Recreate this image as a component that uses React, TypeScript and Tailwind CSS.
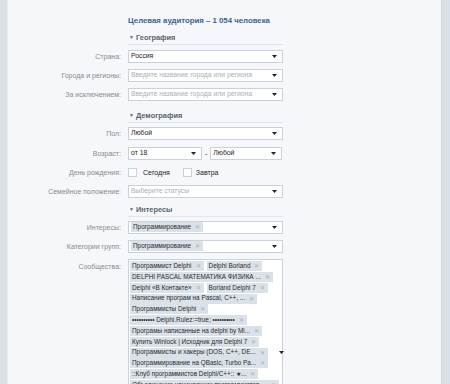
import React from "react";

const Arrow = () => (
  <svg width="5" height="3" viewBox="0 0 5 3" className="shrink-0">
    <path d="M0 0H5L2.5 3Z" fill="#222" />
  </svg>
);

const Label = ({ children }: { children: React.ReactNode }) => (
  <div className="w-[113px] shrink-0 text-right text-[7px] text-[#8a8a8a] leading-none">{children}</div>
);

const Tag = ({ text }: { text: string }) => (
  <span className="inline-flex items-center h-[10px] bg-[#dae1e8] pl-[2px] pr-[3px] text-[6.4px] text-[#2b2b2b] leading-none whitespace-nowrap">
    {text}
    <span className="ml-[4px] text-[#9fb0c2] text-[6px]">✕</span>
  </span>
);

const Select = ({
  children,
  w = "w-[155px]",
}: {
  children?: React.ReactNode;
  w?: string;
}) => (
  <div className={`${w} h-[13px] bg-white border border-[#c9d1da] flex items-center pl-[2px] pr-[5px]`}>
    <div className="flex-1 flex items-center overflow-hidden">{children}</div>
    <Arrow />
  </div>
);

const Row = ({ label, children, mt }: { label: string; children: React.ReactNode; mt: string }) => (
  <div className={`flex items-center ${mt}`}>
    <Label>{label}</Label>
    <div className="ml-[7px]">{children}</div>
  </div>
);

const Section = ({ title, mt }: { title: string; mt: string }) => (
  <div className={`ml-[120px] w-[155px] ${mt}`}>
    <div className="h-[10px] flex items-center text-[7.4px] font-bold text-[#59636e] pl-[1px] leading-none">
      <span className="text-[5px] mr-[2px]">▼</span>
      {title}
    </div>
    <div className="h-[1px] bg-[#e0e5ea] mt-[1px]" />
  </div>
);

const Placeholder = ({ t }: { t: string }) => (
  <span className="text-[6.8px] text-[#a9afb6] leading-none whitespace-nowrap">{t}</span>
);
const Val = ({ t }: { t: string }) => (
  <span className="text-[6.8px] text-[#222] leading-none whitespace-nowrap">{t}</span>
);

const communities: string[][] = [
  ["Программист Delphi", "Delphi Borland"],
  ["DELPHI PASCAL МАТЕМАТИКА ФИЗИКА ..."],
  ["Delphi «В Контакте»", "Borland Delphi 7"],
  ["Написание програм на Pascal, C++, ..."],
  ["Программисты Delphi"],
  ["•••••••••• Delphi.Rulez:=true; ••••••••••"],
  ["Програмы написанные на delphi by Mi..."],
  ["Купить Winlock | Исходник для Delphi 7"],
  ["Программисты и хакеры (DOS, C++, DE..."],
  ["Программирование на QBasic, Turbo Pa..."],
  ["::Клуб программистов Delphi/C++:: ★..."],
  ["Объединение начинающих программистов ..."],
];

export default function App() {
  return (
    <div
      className="w-[450px] h-[384px] overflow-hidden flex bg-[#f5f7fa]"
      style={{ fontFamily: '"Liberation Sans", Arial, sans-serif' }}
    >
      <div className="w-[8px] h-full flex shrink-0">
        <div className="w-[7px] bg-[#d9e0e7]" />
        <div className="w-[1px] bg-[#e8ecf0]" />
      </div>
      <div className="flex-1 flex flex-col">
        <div className="ml-[12px] w-[285px] h-[2px] mt-[4px] bg-[#e6e9ee]" />
        <div className="ml-[120px] mt-[13px] text-[7.8px] font-bold text-[#3b6390] leading-none h-[8px]">
          Целевая аудитория – 1 054 человека
        </div>
        <Section title="География" mt="mt-[8px]" />
        <Row label="Страна:" mt="mt-[5px]">
          <Select>
            <Val t="Россия" />
          </Select>
        </Row>
        <Row label="Города и регионы:" mt="mt-[6px]">
          <Select>
            <Placeholder t="Введите название города или региона" />
          </Select>
        </Row>
        <Row label="За исключением:" mt="mt-[6px]">
          <Select>
            <Placeholder t="Введите название города или региона" />
          </Select>
        </Row>
        <Section title="Демография" mt="mt-[10px]" />
        <Row label="Пол:" mt="mt-[4px]">
          <Select>
            <Val t="Любой" />
          </Select>
        </Row>
        <Row label="Возраст:" mt="mt-[7px]">
          <div className="flex items-center">
            <Select w="w-[74px]">
              <Val t="от 18" />
            </Select>
            <span className="mx-[3px] text-[7px] text-[#222] leading-none">-</span>
            <Select w="w-[72px]">
              <Val t="Любой" />
            </Select>
          </div>
        </Row>
        <Row label="День рождения:" mt="mt-[7px]">
          <div className="flex items-center h-[11px]">
            <div className="w-[9px] h-[9px] bg-white border border-[#c9d1da]" />
            <span className="ml-[6px] text-[7px] text-[#222] leading-none">Сегодня</span>
            <div className="ml-[13px] w-[9px] h-[9px] bg-white border border-[#c9d1da]" />
            <span className="ml-[4px] text-[7px] text-[#222] leading-none">Завтра</span>
          </div>
        </Row>
        <Row label="Семейное положение:" mt="mt-[7px]">
          <Select>
            <Placeholder t="Выберите статусы" />
          </Select>
        </Row>
        <Section title="Интересы" mt="mt-[7px]" />
        <Row label="Интересы:" mt="mt-[4px]">
          <Select>
            <Tag text="Программирование" />
          </Select>
        </Row>
        <Row label="Категории групп:" mt="mt-[6px]">
          <Select>
            <Tag text="Программирование" />
          </Select>
        </Row>
        <div className="flex items-start mt-[6px]">
          <div className="pt-[4px]">
            <Label>Сообщества:</Label>
          </div>
          <div className="ml-[7px] w-[155px] h-[190px] bg-white border border-[#c9d1da] flex items-center pr-[5px] shrink-0">
            <div className="flex-1 self-start pt-[1.5px] pl-[1px] flex flex-col">
              {communities.map((row, i) => (
                <div key={i} className="flex gap-x-[3px] h-[10.8px] shrink-0">
                  {row.map((t) => (
                    <Tag key={t} text={t} />
                  ))}
                </div>
              ))}
            </div>
            <div className="self-start mt-[91px]">
              <Arrow />
            </div>
          </div>
        </div>
      </div>
      <div className="w-[9px] h-full flex shrink-0">
        <div className="w-[1px] bg-[#cfd6de]" />
        <div className="flex-1 bg-[#d9e0e7]" />
      </div>
    </div>
  );
}
